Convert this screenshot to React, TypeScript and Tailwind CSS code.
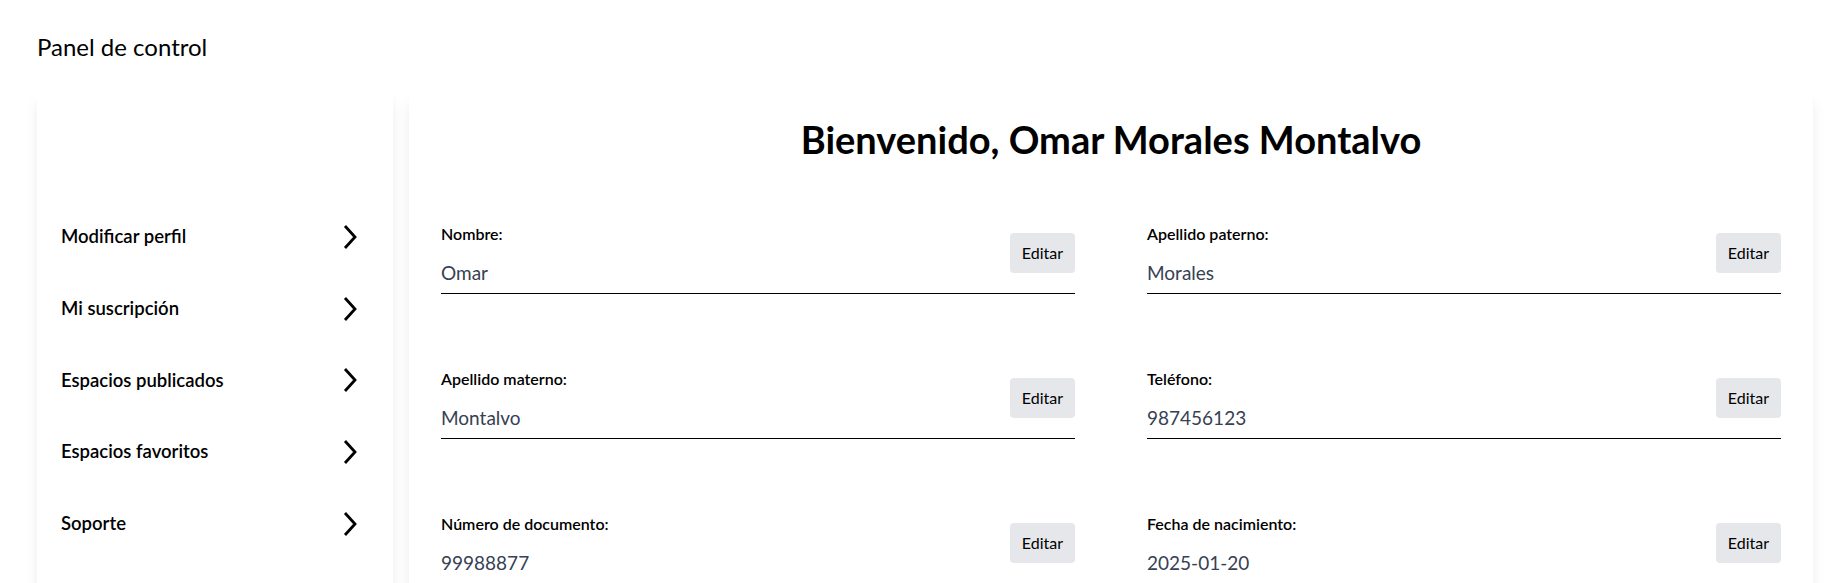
const menu = [
  "Modificar perfil",
  "Mi suscripción",
  "Espacios publicados",
  "Espacios favoritos",
  "Soporte",
];

const fields = [
  { label: "Nombre:", value: "Omar" },
  { label: "Apellido paterno:", value: "Morales" },
  { label: "Apellido materno:", value: "Montalvo" },
  { label: "Teléfono:", value: "987456123" },
  { label: "Número de documento:", value: "99988877" },
  { label: "Fecha de nacimiento:", value: "2025-01-20" },
];

const Chevron = () => (
  <svg width="14" height="26" viewBox="0 0 14 26" fill="none" className="shrink-0">
    <polyline points="2,2 12,13 2,24" stroke="black" strokeWidth="2.8" strokeLinejoin="miter" />
  </svg>
);

const App = () => {
  return (
    <div className="min-h-screen bg-white pl-[37px] pr-8 pt-[31px] font-['Lato',sans-serif] text-black">
      <h1 className="mb-[27px] text-2xl">Panel de control</h1>

      <div className="flex items-start gap-4">
        <aside className="w-[356px] shrink-0 bg-white pb-8 pl-6 pr-9 pt-[111px] shadow-lg">
          <ul>
            {menu.map((item) => (
              <li key={item} className="flex items-center justify-between py-[22px] text-[18.5px] font-semibold">
                <span>{item}</span>
                <Chevron />
              </li>
            ))}
          </ul>
        </aside>

        <main className="flex-1 bg-white px-8 pb-8 pt-[29px] shadow-lg">
          <h2 className="mb-[65px] text-center text-[38px] leading-10 font-bold">Bienvenido, Omar Morales Montalvo</h2>

          <div className="grid grid-cols-2 gap-x-18 gap-y-[75px]">
            {fields.map((f) => (
              <div key={f.label} className="flex items-center justify-between border-b border-black pb-[6px]">
                <div>
                  <label className="mb-[15px] block text-base leading-5 font-semibold">{f.label}</label>
                  <p className="text-[19px] leading-7 text-gray-700">{f.value}</p>
                </div>
                <button className="mb-[5px] rounded bg-gray-200 px-3 py-2 text-base">Editar</button>
              </div>
            ))}
          </div>
        </main>
      </div>
    </div>
  );
};

export default App;
